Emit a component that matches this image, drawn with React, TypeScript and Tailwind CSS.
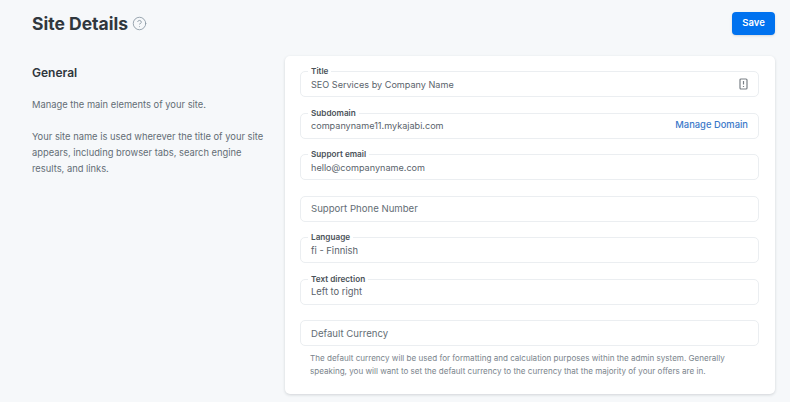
import { CircleHelp } from "lucide-react";

interface FieldProps {
  label?: string;
  value: string;
  textClass?: string;
  right?: React.ReactNode;
}

const Field = ({ label, value, textClass = "text-[9.1px] text-[#5a636b]", right }: FieldProps) => {
  return (
    <div className="relative h-[26px] flex items-center justify-between rounded-[5px] border border-[#ebeef1] bg-white pl-[10px] pr-[10px]">
      {label && (
        <span className="absolute left-[7px] top-[-6px] bg-white px-[3px] text-[8.2px] leading-[11px] font-semibold text-[#4a5259]">
          {label}
        </span>
      )}
      <span className={`leading-[14px] pt-[1.5px] ${textClass}`}>{value}</span>
      {right}
    </div>
  );
};

const App = () => {
  return (
    <div className="h-[402px] w-[790px] overflow-hidden bg-[#f6f8fa] font-['Inter',sans-serif]">
      <div className="flex items-start justify-between pl-[32px] pr-[15px] pt-[12px]">
        <div className="flex items-center gap-[4px] pb-[2px]">
          <h1 className="text-[17.5px] leading-[23px] font-bold text-[#30373d]">Site Details</h1>
          <CircleHelp className="h-[15px] w-[15px] text-[#8b99a5]" strokeWidth={1.4} />
        </div>
        <button className="h-[23px] w-[43px] rounded-[4px] bg-[#0072ef] text-[9.5px] font-semibold text-white shadow-sm">
          Save
        </button>
      </div>
      <div className="flex pt-[19px] pl-[32px]">
        <div className="w-[253px] shrink-0 pt-[9px]">
          <h2 className="text-[12px] leading-[16px] font-semibold text-[#30373d]">General</h2>
          <p className="mt-[16px] text-[9.35px] leading-[15.5px] text-[#636d75]">Manage the main elements of your site.</p>
          <p className="mt-[16px] w-[240px] text-[9.35px] leading-[16px] text-[#636d75]">
            Your site name is used wherever the title of your site appears, including browser tabs, search engine results, and links.
          </p>
        </div>
        <div className="flex h-[338px] w-[490px] flex-col gap-[15.5px] rounded-[5px] bg-white pl-[15px] pr-[16px] pt-[15px] shadow-[0_1px_3px_rgba(40,50,60,0.18)]">
          <Field
            label="Title"
            value="SEO Services by Company Name"
            right={
              <svg width="9" height="12" viewBox="0 0 9 12" fill="none" className="text-[#7a8086]">
                <rect x="1" y="1" width="7" height="10" rx="1" stroke="currentColor" strokeWidth="1.2" />
                <path d="M4.5 3v3.5M4.5 8v1" stroke="currentColor" strokeWidth="1.2" />
              </svg>
            }
          />
          <Field
            label="Subdomain"
            value="companyname11.mykajabi.com"
            right={<span className="text-[9.4px] font-medium text-[#3a78c9]">Manage Domain</span>}
          />
          <Field label="Support email" value="hello@companyname.com" />
          <Field value="Support Phone Number" textClass="text-[9.6px] text-[#636d75]" />
          <Field label="Language" value="fi - Finnish" textClass="text-[9.4px] text-[#5a636b]" />
          <Field label="Text direction" value="Left to right" textClass="text-[9.4px] text-[#5a636b]" />
          <div>
            <Field value="Default Currency" textClass="text-[9.6px] text-[#636d75]" />
            <p className="mt-[6px] pl-[10px] text-[8.07px] leading-[13px] text-[#7a848c]">
              The default currency will be used for formatting and calculation purposes within the admin system. Generally speaking, you will want to set the default currency to the currency that the majority of your offers are in.
            </p>
          </div>
        </div>
      </div>
    </div>
  );
};

export default App;
